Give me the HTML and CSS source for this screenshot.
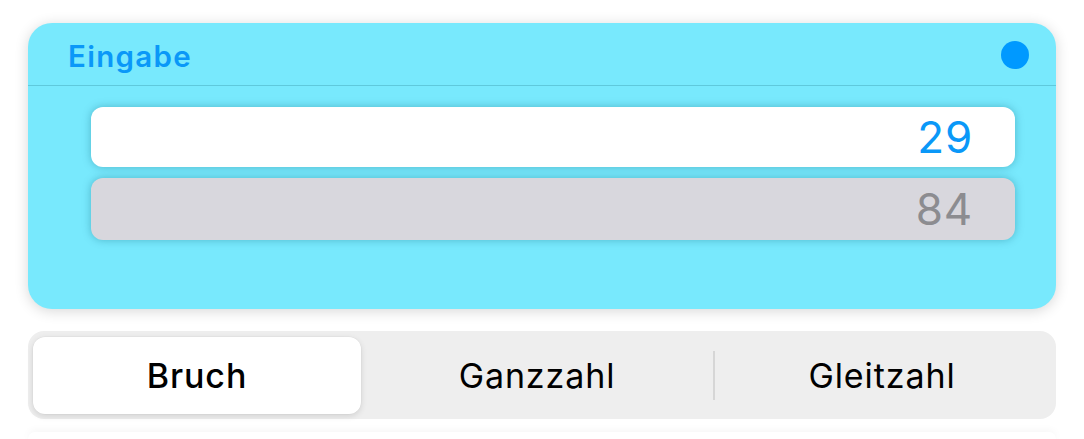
FILE: index.html
```html
<!DOCTYPE html>
<html lang="de">
<head>
<meta charset="utf-8">
<title>Eingabe</title>
<link rel="stylesheet" href="styles.css">
</head>
<body>
<div class="page">
  <section class="card">
    <header class="card-head">
      <h2 class="card-title">Eingabe</h2>
      <span class="dot"></span>
    </header>
    <div class="fields">
      <div class="field field-active">29</div>
      <div class="field field-disabled">84</div>
    </div>
  </section>
  <div class="segmented">
    <div class="seg seg-selected">Bruch</div>
    <div class="seg">Ganzzahl</div>
    <div class="seg seg-sep">Gleitzahl</div>
  </div>
  <div class="next-card"></div>
</div>
</body>
</html>
```
FILE: styles.css
```css
* { box-sizing: border-box; }
html, body { margin: 0; padding: 0; background: #ffffff; }
body { font-family: "Inter", "Noto Sans", "Liberation Sans", sans-serif; overflow: hidden; height: 439px; }
.page { padding: 23px 28px 0 28px; width: 1084px; height: 439px; overflow: hidden; }
.card {
  background: #78e9fd;
  border-radius: 24px;
  height: 286px;
  box-shadow: 0 2px 14px rgba(0,0,0,0.16);
}
.card-head {
  height: 63px;
  border-bottom: 1px solid #5fc9dc;
  display: flex;
  align-items: center;
  justify-content: space-between;
  padding: 4px 27px 0 40px;
}
.card-title {
  margin: 0;
  font-size: 29.5px;
  font-weight: 600;
  color: #0a98f8;
  letter-spacing: 1.3px;
}
.dot {
  width: 28px; height: 28px;
  border-radius: 50%;
  background: #0099ff;
  margin-top: -2px;
}
.fields {
  display: flex;
  flex-direction: column;
  gap: 11px;
  padding: 21px 41px 0 63px;
}
.field {
  border-radius: 12px;
  text-align: right;
  padding-right: 42px;
  font-size: 44px;
  font-weight: 400;
  letter-spacing: 0.8px;
  display: flex;
  align-items: center;
  justify-content: flex-end;
  box-shadow: 0 0 9px rgba(0,90,110,0.35);
}
.field-active { background: #ffffff; color: #0a98f8; height: 60px; }
.field-disabled { background: #d8d7dd; color: #8c8c90; height: 62px; }
.segmented {
  margin-top: 22px;
  height: 88px;
  background: #eeeeee;
  border-radius: 16px;
  padding: 6px 5px 5px 5px;
  display: grid;
  grid-template-columns: 328px 352px 1fr;
}
.seg {
  display: flex;
  align-items: center;
  justify-content: center;
  font-size: 34px;
  letter-spacing: 0.9px;
  color: #000;
  position: relative;
}
.seg-selected {
  background: #ffffff;
  border-radius: 12px;
  font-weight: 500;
  box-shadow: 0 2px 6px rgba(0,0,0,0.12), 0 0 0 0.5px rgba(0,0,0,0.04);
}
.seg-sep::before {
  content: "";
  position: absolute;
  left: 0;
  top: 14px;
  bottom: 14px;
  width: 2px;
  background: #d6d6d6;
}
.next-card {
  margin-top: 13px;
  height: 7px;
  border-radius: 16px 16px 0 0;
  background: #ffffff;
  box-shadow: 0 -1px 8px rgba(0,0,0,0.05);
}
```
